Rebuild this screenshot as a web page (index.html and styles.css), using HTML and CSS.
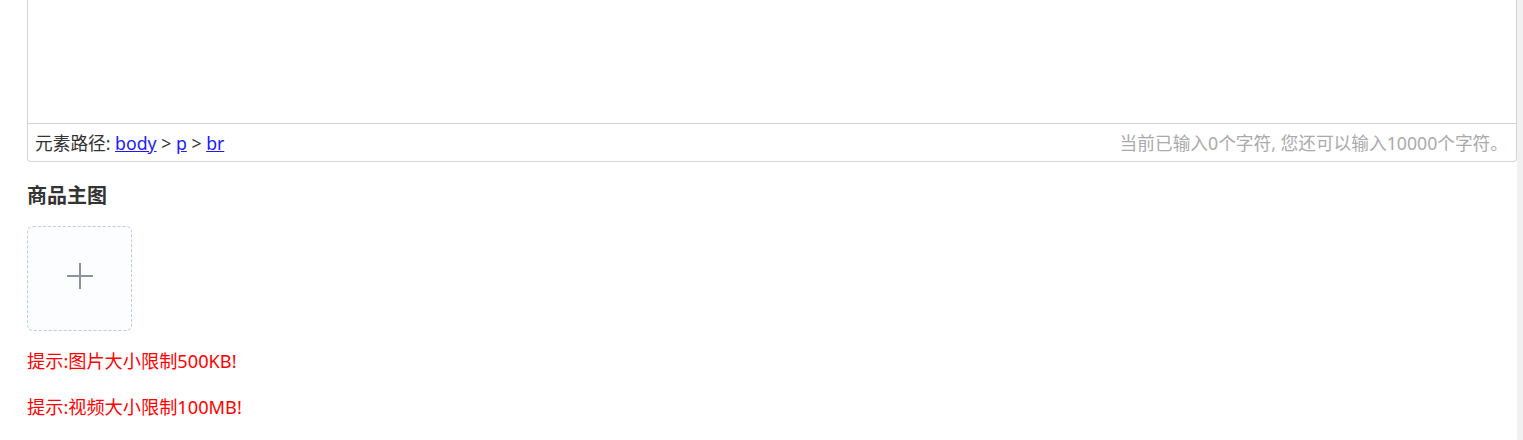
FILE: index.html
```html
<!DOCTYPE html>
<html lang="zh-CN">
<head>
<meta charset="utf-8">
<link rel="stylesheet" href="styles.css">
</head>
<body>
<div class="page">
  <main class="content">
    <div class="editor">
      <div class="editor-body"></div>
      <div class="editor-status">
        <div class="path">元素路径: <a href="#">body</a> &gt; <a href="#">p</a> &gt; <a href="#">br</a></div>
        <div class="count">当前已输入0个字符, 您还可以输入10000个字符。</div>
      </div>
    </div>
    <h3 class="label">商品主图</h3>
    <div class="uploader">
      <svg class="plus" width="26" height="26" viewBox="0 0 26 26"><path d="M13 0v26M0 13h26" stroke="#8c939d" stroke-width="2" fill="none"/></svg>
    </div>
    <p class="tip">提示:图片大小限制500KB!</p>
    <p class="tip">提示:视频大小限制100MB!</p>
  </main>
  <div class="scrollbar"></div>
</div>
</body>
</html>
```
FILE: styles.css
```css
html, body { margin: 0; padding: 0; background: #fff; }
body { font-family: "Noto Sans", "Noto Sans CJK SC", sans-serif; color: #333; }
.page { display: flex; height: 440px; overflow: hidden; }
.content { flex: 1; padding: 0 0 0 27px; }
.scrollbar { width: 6px; background: #f1f1f1; }
.editor {
  border: 1px solid #d4d4d4;
  border-top: none;
  border-radius: 0 0 4px 4px;
}
.editor-body { height: 123px; border-bottom: 1px solid #d4d4d4; }
.editor-status {
  display: flex; justify-content: space-between; align-items: center;
  height: 37px; padding: 0 8px 0 7px; font-size: 17.7px; line-height: 22px;
}
.path { color: #333; }
.path a { color: #1a1aff; }
.count { color: #aaa; }
.label { margin: 22px 0 18px; font-size: 20px; line-height: 24px; font-weight: bold; color: #333; }
.uploader {
  width: 103px; height: 103px;
  border: 1px dashed #c0ccda; border-radius: 6px; background: #fbfdff;
  display: flex; align-items: center; justify-content: center;
}
.plus { margin-top: -5px; }
.tip { margin: 18px 0 0; color: #f00; font-size: 18.2px; line-height: 24px; }
.tip + .tip { margin-top: 22px; }
```
